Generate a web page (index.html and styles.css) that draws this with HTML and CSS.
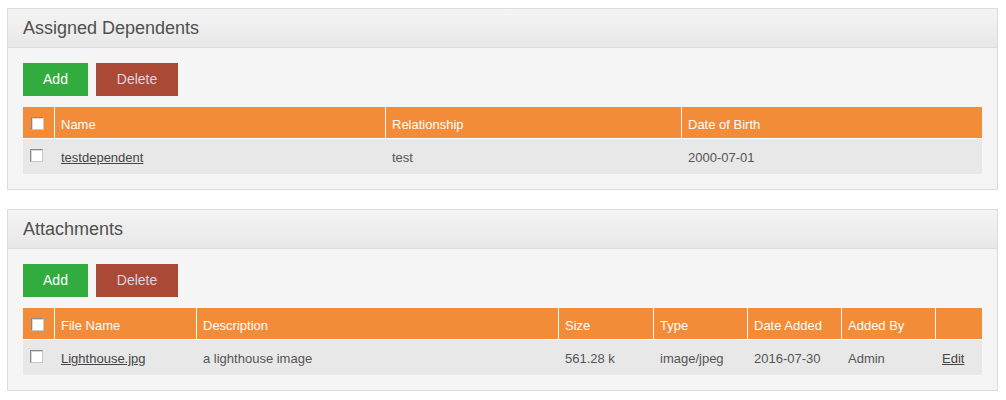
FILE: index.html
```html
<!DOCTYPE html>
<html lang="en">
<head>
<meta charset="utf-8">
<title>Dependents and Attachments</title>
<link rel="stylesheet" href="styles.css">
</head>
<body>
<section class="box">
  <div class="box-head"><h1>Assigned Dependents</h1></div>
  <div class="box-body">
    <div class="actions">
      <button class="btn btn-add" type="button">Add</button>
      <button class="btn btn-delete" type="button">Delete</button>
    </div>
    <table class="grid">
      <thead>
        <tr>
          <th class="c-check"><input type="checkbox" class="chk"></th>
          <th class="d-name">Name</th>
          <th class="d-rel">Relationship</th>
          <th class="d-dob last">Date of Birth</th>
        </tr>
      </thead>
      <tbody>
        <tr>
          <td class="c-check"><input type="checkbox" class="chk"></td>
          <td><a href="#">testdependent</a></td>
          <td>test</td>
          <td>2000-07-01</td>
        </tr>
      </tbody>
    </table>
  </div>
</section>

<section class="box">
  <div class="box-head"><h1>Attachments</h1></div>
  <div class="box-body">
    <div class="actions">
      <button class="btn btn-add" type="button">Add</button>
      <button class="btn btn-delete" type="button">Delete</button>
    </div>
    <table class="grid">
      <thead>
        <tr>
          <th class="c-check"><input type="checkbox" class="chk"></th>
          <th class="a-file">File Name</th>
          <th class="a-desc">Description</th>
          <th class="a-size">Size</th>
          <th class="a-type">Type</th>
          <th class="a-date">Date Added</th>
          <th class="a-by">Added By</th>
          <th class="a-edit last"></th>
        </tr>
      </thead>
      <tbody>
        <tr>
          <td class="c-check"><input type="checkbox" class="chk"></td>
          <td><a href="#">Lighthouse.jpg</a></td>
          <td>a lighthouse image</td>
          <td>561.28 k</td>
          <td>image/jpeg</td>
          <td>2016-07-30</td>
          <td>Admin</td>
          <td><a href="#">Edit</a></td>
        </tr>
      </tbody>
    </table>
  </div>
</section>
</body>
</html>
```

FILE: styles.css
```css
html, body {
  background: #ffffff;
}

body {
  margin: 8px 8px 0 7px;
  font-family: "Liberation Sans", Arial, sans-serif;
  font-size: 13px;
  color: #555555;
}

.box {
  border: 1px solid #dcdcdc;
  background: #f5f5f5;
}

.box + .box {
  margin-top: 19px;
}

.box-head {
  height: 38px;
  padding: 0 15px;
  background: linear-gradient(to bottom, #f4f4f4 0%, #e8e8e8 100%);
  border-bottom: 1px solid #dcdcdc;
}

.box-head h1 {
  margin: 0;
  font-size: 18px;
  font-weight: normal;
  line-height: 38px;
  color: #4f4f4f;
}

.box-body {
  padding: 15px 15px 15px 15px;
}

.actions {
  display: flex;
  gap: 8px;
  margin-bottom: 11px;
}

.btn {
  height: 33px;
  margin: 0;
  border: none;
  padding: 0;
  font-family: "Liberation Sans", Arial, sans-serif;
  font-size: 14px;
  line-height: 33px;
  cursor: pointer;
}

.btn-add {
  width: 65px;
  background: #33ac3f;
  color: #ffffff;
}

.btn-delete {
  width: 82px;
  background: #aa4936;
  color: #dcd6e2;
}

.grid {
  width: 959px;
  table-layout: fixed;
  border-collapse: separate;
  border-spacing: 0;
}

.grid th,
.grid td {
  box-sizing: border-box;
  text-align: left;
  vertical-align: top;
  white-space: nowrap;
  font-weight: normal;
  line-height: 15px;
}

.grid th {
  height: 32px;
  padding: 10px 6px 6px 6px;
  background: #f28c38;
  color: #ffffff;
  border-right: 1px solid #ffffff;
  border-bottom: 1px solid #ffffff;
}

.grid th.last {
  border-right: none;
}

.grid td {
  height: 35px;
  padding: 11px 6px 9px 6px;
  background: #e8e8e8;
  color: #555555;
}

.grid th.c-check {
  padding: 10px 0 0 8px;
}

.grid td.c-check {
  padding: 10px 0 0 7px;
}

.grid a {
  color: #454545;
  text-decoration: underline;
}

.chk {
  appearance: none;
  -webkit-appearance: none;
  display: block;
  width: 13px;
  height: 13px;
  margin: 0;
  box-sizing: border-box;
  background: #ffffff;
  border: 1px solid #8a8a8a;
  border-right-color: #c8c8c8;
  border-bottom-color: #c8c8c8;
  box-shadow: inset 1px 1px 0 #d8d8d8;
}

.c-check { width: 32px; }

.d-name { width: 331px; }
.d-rel { width: 296px; }
.d-dob { width: 300px; }

.a-file { width: 142px; }
.a-desc { width: 362px; }
.a-size { width: 95px; }
.a-type { width: 94px; }
.a-date { width: 94px; }
.a-by { width: 94px; }
.a-edit { width: 46px; }
```
